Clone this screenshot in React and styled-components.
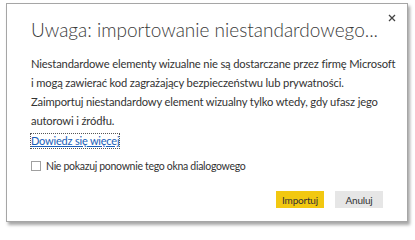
import React from 'react';
import styled, { createGlobalStyle } from 'styled-components';

const GlobalStyle = createGlobalStyle`
  body {
    margin: 0;
    background: #ffffff;
    font-family: Lato, "Open Sans", "Liberation Sans", sans-serif;
  }
`;

const Page = styled.div`
  width: 415px;
  height: 240px;
  padding: 3px 0 0 6px;
  box-sizing: border-box;
`;

const Dialog = styled.div`
  position: relative;
  width: 402px;
  height: 219px;
  box-sizing: border-box;
  border: 1px solid #a6a6a6;
  background: #fff;
  box-shadow: 2px 3px 3px rgba(0, 0, 0, 0.35);
  padding: 12px 24px 0 24px;
  display: flex;
  flex-direction: column;
`;

const Close = styled.button`
  position: absolute;
  top: 9px;
  right: 10px;
  border: none;
  background: none;
  padding: 0;
  width: 10px;
  height: 10px;
  display: flex;
  align-items: center;
  justify-content: center;
`;

const Title = styled.h1`
  margin: 0;
  font-weight: 300;
  font-size: 19px;
  line-height: 28px;
  color: #3a3a3a;
  white-space: nowrap;
`;

const Body = styled.p`
  margin: 10px 0 0;
  font-size: 11.2px;
  letter-spacing: -0.15px;
  line-height: 19px;
  color: #333;
  white-space: nowrap;
`;

const Link = styled.a`
  align-self: flex-start;
  margin-top: 4px;
  font-size: 11px;
  letter-spacing: -0.2px;
  line-height: 14px;
  color: #1a5eb8;
  text-decoration: underline;
  outline: 1px dotted #555;
`;

const CheckRow = styled.label`
  display: flex;
  align-items: center;
  gap: 5px;
  height: 14px;
  margin-top: 11px;
  font-size: 10.5px;
  letter-spacing: -0.3px;
  color: #333;
`;

const Box = styled.span`
  width: 8px;
  height: 8px;
  border: 1px solid #a0a0a0;
  background: #fff;
`;

const Actions = styled.div`
  display: flex;
  justify-content: flex-end;
  gap: 11px;
  margin-top: 18px;
`;

const Button = styled.button`
  width: 48px;
  height: 17px;
  border: none;
  padding: 0;
  font-family: inherit;
  font-size: 10px;
  letter-spacing: -0.2px;
  color: #333;
  background: ${p => (p.$primary ? '#f2c811' : '#e6e6e6')};
`;

export default function App() {
  return (
    <>
      <GlobalStyle />
      <Page>
        <Dialog>
          <Close aria-label="Zamknij">
            <svg width="8" height="8" viewBox="0 0 8 8">
              <path d="M1 1 L7 7 M7 1 L1 7" stroke="#444" strokeWidth="1.3" />
            </svg>
          </Close>
          <Title>Uwaga: importowanie niestandardowego...</Title>
          <Body>
            Niestandardowe elementy wizualne nie są dostarczane przez firmę Microsoft
            <br />
            i mogą zawierać kod zagrażający bezpieczeństwu lub prywatności.
            <br />
            Zaimportuj niestandardowy element wizualny tylko wtedy, gdy ufasz jego
            <br />
            autorowi i źródłu.
          </Body>
          <Link href="#">Dowiedz się więcej</Link>
          <CheckRow>
            <Box />
            Nie pokazuj ponownie tego okna dialogowego
          </CheckRow>
          <Actions>
            <Button $primary>Importuj</Button>
            <Button>Anuluj</Button>
          </Actions>
        </Dialog>
      </Page>
    </>
  );
}
